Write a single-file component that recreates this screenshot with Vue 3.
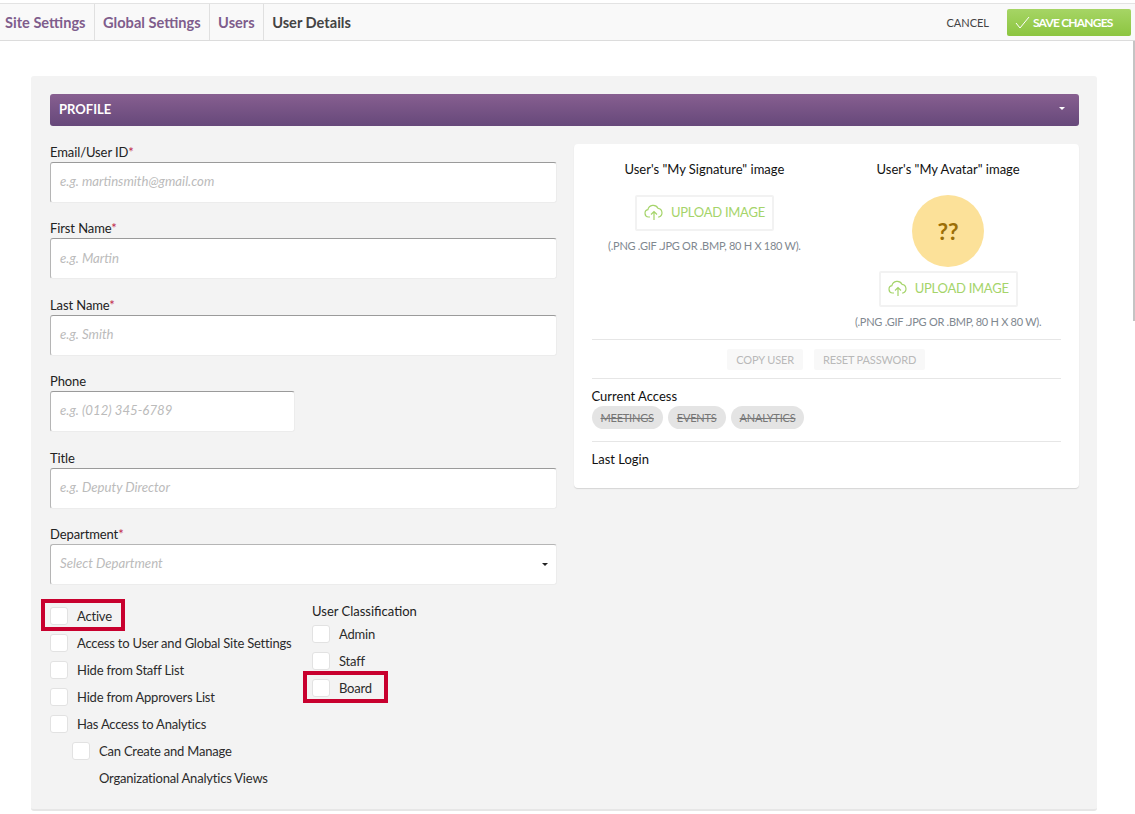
<script setup>
const crumbs = ['Site Settings', 'Global Settings', 'Users']
const fields = [
  { label: 'Email/User ID', required: true, placeholder: 'e.g. martinsmith@gmail.com' },
  { label: 'First Name', required: true, placeholder: 'e.g. Martin' },
  { label: 'Last Name', required: true, placeholder: 'e.g. Smith' },
  { label: 'Phone', required: false, placeholder: 'e.g. (012) 345-6789', short: true },
  { label: 'Title', required: false, placeholder: 'e.g. Deputy Director' }
]
const options = [
  { text: 'Active', marked: true },
  { text: 'Access to User and Global Site Settings' },
  { text: 'Hide from Staff List' },
  { text: 'Hide from Approvers List' },
  { text: 'Has Access to Analytics' }
]
const classes = [{ text: 'Admin' }, { text: 'Staff' }, { text: 'Board', marked: true }]
const access = ['MEETINGS', 'EVENTS', 'ANALYTICS']
</script>

<template>
  <div class="page">
    <header class="topbar">
      <nav class="crumbs">
        <a v-for="c in crumbs" :key="c" class="crumb">{{ c }}</a>
        <span class="crumb current">User Details</span>
      </nav>
      <div class="actions">
        <button class="cancel">CANCEL</button>
        <button class="save">
          <svg width="15" height="13" viewBox="0 0 15 13" fill="none" stroke="#fff" stroke-width="1">
            <path d="M1 7l4 5 9-11" />
          </svg>
          SAVE CHANGES
        </button>
      </div>
    </header>

    <main class="panel">
      <div class="panel-head">
        <span>PROFILE</span>
        <i class="caret white"></i>
      </div>

      <div class="columns">
        <section class="left">
          <div v-for="f in fields" :key="f.label" class="field">
            <label>{{ f.label }}<em v-if="f.required">*</em></label>
            <div class="input" :class="{ short: f.short }">{{ f.placeholder }}</div>
          </div>
          <div class="field">
            <label>Department<em>*</em></label>
            <div class="input select">
              Select Department
              <i class="caret"></i>
            </div>
          </div>

          <div class="checks">
            <div class="check-col first">
              <div v-for="o in options" :key="o.text" class="check">
                <span class="box"></span>{{ o.text }}
                <span v-if="o.marked" class="mark mark-active"></span>
              </div>
              <div class="check sub">
                <span class="box"></span>Can Create and Manage
              </div>
              <div class="check sub nobox">Organizational Analytics Views</div>
            </div>
            <div class="check-col">
              <div class="class-title">User Classification</div>
              <div v-for="o in classes" :key="o.text" class="check">
                <span class="box"></span>{{ o.text }}
                <span v-if="o.marked" class="mark mark-board"></span>
              </div>
            </div>
          </div>
        </section>

        <aside class="card">
          <div class="uploads">
            <div class="upload">
              <h4>User's "My Signature" image</h4>
              <button class="upload-btn">
                <svg width="20" height="17" viewBox="0 0 20 17" fill="none" stroke="#a5d46a" stroke-width="1.2">
                  <path d="M6 13H4.5a3.7 3.7 0 0 1-.6-7.3A5.4 5.4 0 0 1 14 4.3 4.5 4.5 0 0 1 15 13h-1" />
                  <path d="M10 16V8M7 10.5L10 7.6l3 2.9" />
                </svg>
                UPLOAD IMAGE
              </button>
              <p>(.PNG .GIF .JPG OR .BMP, 80 H X 180 W).</p>
            </div>
            <div class="upload">
              <h4>User's "My Avatar" image</h4>
              <div class="avatar">??</div>
              <button class="upload-btn">
                <svg width="20" height="17" viewBox="0 0 20 17" fill="none" stroke="#a5d46a" stroke-width="1.2">
                  <path d="M6 13H4.5a3.7 3.7 0 0 1-.6-7.3A5.4 5.4 0 0 1 14 4.3 4.5 4.5 0 0 1 15 13h-1" />
                  <path d="M10 16V8M7 10.5L10 7.6l3 2.9" />
                </svg>
                UPLOAD IMAGE
              </button>
              <p>(.PNG .GIF .JPG OR .BMP, 80 H X 80 W).</p>
            </div>
          </div>
          <div class="row buttons">
            <button class="ghost">COPY USER</button>
            <button class="ghost">RESET PASSWORD</button>
          </div>
          <div class="row access">
            <div class="row-title">Current Access</div>
            <div class="pills">
              <span v-for="a in access" :key="a" class="pill">{{ a }}</span>
            </div>
          </div>
          <div class="row login">
            <div class="row-title">Last Login</div>
          </div>
        </aside>
      </div>
    </main>
    <div class="scroll-thumb"></div>
  </div>
</template>

<style scoped>
.page {
  position: relative;
  height: 814px;
  overflow: hidden;
  padding-top: 3px;
  box-sizing: border-box;
  background: #fff;
  font-family: Lato, sans-serif;
  font-size: 13px;
  color: #333;
}
.topbar {
  display: flex;
  justify-content: space-between;
  align-items: center;
  height: 38px;
  box-sizing: border-box;
  background: #f9f9f9;
  border-top: 1px solid #e3e3e3;
  border-bottom: 1px solid #dcdcdc;
}
.crumbs {
  display: flex;
  height: 100%;
}
.crumb {
  display: flex;
  align-items: center;
  padding: 0 8.5px 0 5px;
  border-right: 1px solid #e0e0e0;
  color: #7f5d8c;
  font-weight: 700;
  font-size: 14.6px;
}
.crumb + .crumb {
  padding-left: 8px;
}
.crumb.current {
  border-right: 0;
  color: #444;
}
.actions {
  display: flex;
  align-items: center;
  gap: 18px;
  padding-right: 4px;
}
.cancel {
  border: 0;
  background: none;
  padding: 0;
  font: 400 11px Lato, sans-serif;
  color: #444;
}
.save {
  display: flex;
  align-items: center;
  gap: 3px;
  width: 124px;
  height: 27px;
  padding: 0 0 0 8px;
  border: 0;
  border-radius: 2px;
  background: linear-gradient(#a6d565, #8cc540);
  color: #fff;
  font: 700 12px Lato, sans-serif;
  letter-spacing: -0.8px;
}
.panel {
  width: 1066px;
  height: 735px;
  box-sizing: border-box;
  margin: 35px 0 0 31px;
  padding: 18px 18px 0 19px;
  background: #f3f3f3;
  border-radius: 3px;
  border-bottom: 2px solid #e6e6e6;
}
.panel-head {
  display: flex;
  justify-content: space-between;
  align-items: center;
  height: 32px;
  padding: 0 14px 3px 9px;
  box-sizing: border-box;
  border-radius: 3px;
  background: linear-gradient(#875f90, #66487a);
  color: #fff;
  font-weight: 700;
  font-size: 13px;
}
.caret {
  width: 0;
  height: 0;
  border-left: 3px solid transparent;
  border-right: 3px solid transparent;
  border-top: 3px solid #222;
}
.caret.white {
  border-top-color: #fff;
}
.columns {
  display: flex;
  align-items: flex-start;
  gap: 17px;
  padding-top: 18px;
}
.left {
  width: 507px;
  flex: none;
}
.field {
  height: 76.4px;
}
.field label {
  display: block;
  height: 18px;
  line-height: 16px;
  color: #222;
  letter-spacing: -0.1px;
}
.field em {
  color: #c0284b;
  font-style: normal;
}
.input {
  display: flex;
  align-items: center;
  height: 41px;
  box-sizing: border-box;
  padding: 0 0 2.4px 9px;
  background: #fff;
  border-top: 1px solid #9a9a9a;
  border-left: 1px solid #b5b5b5;
  border-right: 1px solid #ececec;
  border-bottom: 1px solid #ececec;
  border-radius: 3px;
  color: #bbb;
  font-size: 13.2px;
  font-style: italic;
}
.input.short {
  width: 245px;
}
.select {
  justify-content: space-between;
  padding-right: 8px;
  border-top-color: #b5b5b5;
}
.select .caret {
  margin-top: 3px;
}
.checks {
  display: flex;
  margin-top: 0.5px;
}
.check-col.first {
  width: 262px;
  flex: none;
}
.check {
  position: relative;
  display: flex;
  align-items: center;
  height: 27px;
  color: #2b2b2b;
  letter-spacing: -0.2px;
  white-space: nowrap;
}
.box {
  width: 18px;
  height: 18px;
  box-sizing: border-box;
  margin-right: 9px;
  background: #fff;
  border: 1px solid #e2e2e2;
  border-radius: 3px;
}
.sub {
  padding-left: 22px;
}
.nobox {
  padding-left: 49px;
}
.class-title {
  height: 18px;
  color: #222;
}
.mark {
  position: absolute;
  border: 4px solid #c8002e;
  box-sizing: border-box;
  pointer-events: none;
}
.mark-active {
  left: -9px;
  top: -4px;
  width: 84px;
  height: 32px;
}
.mark-board {
  left: -9px;
  top: -4px;
  width: 85px;
  height: 32px;
}
.card {
  width: 505px;
  height: 344px;
  box-sizing: border-box;
  padding: 0 18px 0 17.5px;
  background: #fff;
  border-radius: 4px;
  box-shadow: 0 1px 1px #d5d5d5;
  color: #222;
}
.uploads {
  display: flex;
  gap: 18px;
  height: 195px;
  border-bottom: 1px solid #e6e6e6;
}
.upload {
  flex: 1;
  display: flex;
  flex-direction: column;
  align-items: center;
  padding-top: 17px;
}
.upload h4 {
  margin: 0 0 18px;
  font-size: 13px;
  line-height: 16px;
  font-weight: 400;
  color: #111;
}
.upload p {
  margin: 8px 0 0;
  font-size: 11px;
  letter-spacing: -0.27px;
  white-space: nowrap;
  color: #7f8890;
}
.upload-btn {
  display: flex;
  align-items: center;
  gap: 7px;
  width: 139px;
  height: 36px;
  box-sizing: border-box;
  padding: 0 0 2px 7px;
  background: #fff;
  border: 2px solid #f2f2f2;
  border-radius: 2px;
  color: #a5d46a;
  font: 400 13px Lato, sans-serif;
  letter-spacing: -0.25px;
}
.avatar {
  display: flex;
  align-items: center;
  justify-content: center;
  width: 72px;
  height: 72px;
  margin-bottom: 4px;
  border-radius: 50%;
  background: #fce199;
  color: #9c6f07;
  font-weight: 700;
  font-size: 23px;
}
.row {
  border-bottom: 1px solid #e6e6e6;
}
.buttons {
  display: flex;
  justify-content: center;
  gap: 11px;
  height: 39px;
  align-items: center;
  box-sizing: border-box;
}
.ghost {
  height: 21px;
  padding: 0 9px;
  border: 0;
  border-radius: 2px;
  background: #f8f8f8;
  color: #b9b9b9;
  font: 400 11px Lato, sans-serif;
  letter-spacing: -0.15px;
}
.access {
  height: 63px;
  padding-top: 9px;
  box-sizing: border-box;
}
.row-title {
  font-size: 13px;
  line-height: 16px;
  color: #111;
}
.pills {
  display: flex;
  gap: 5px;
  margin-top: 2px;
}
.pill {
  height: 23px;
  line-height: 23px;
  padding: 0 9px;
  border-radius: 12px;
  background: #e4e4e4;
  color: #777;
  font-size: 11px;
  letter-spacing: -0.2px;
  text-decoration: line-through;
}
.login {
  border: 0;
  padding-top: 9px;
}
.scroll-thumb {
  position: absolute;
  right: 0;
  top: 41px;
  width: 2px;
  height: 280px;
  background: #c4c4c4;
}
</style>
